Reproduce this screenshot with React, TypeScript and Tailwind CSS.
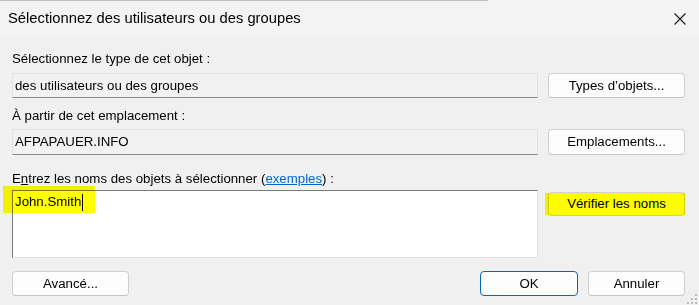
import React from "react"

const font = { fontFamily: '"Segoe UI", "Liberation Sans", Arial, sans-serif' }

function WinButton({
  children,
  className = "",
  primary = false,
}: {
  children: React.ReactNode
  className?: string
  primary?: boolean
}) {
  return (
    <button
      className={`flex items-center justify-center rounded-[4px] bg-[#fdfdfd] text-[13.25px] text-black ${
        primary ? "border border-[#0067c0]" : "border border-[#d0d0d0] border-b-[#c4c4c4]"
      } ${className}`}
    >
      {children}
    </button>
  )
}

function ReadOnlyField({ value, className = "" }: { value: string; className?: string }) {
  return (
    <div
      className={`flex items-center w-[526px] border border-[#e2e2e2] border-b-[#8a8a8a] bg-[#f2f2f2] pl-[2px] text-[13.25px] text-black ${className}`}
    >
      {value}
    </div>
  )
}

function ResizeGrip() {
  const dots = [
    [8, 0],
    [4, 4],
    [8, 4],
    [0, 8],
    [4, 8],
    [8, 8],
  ]
  return (
    <svg width="10" height="10" viewBox="0 0 10 10" className="absolute right-[2px] bottom-[1px]">
      {dots.map(([x, y], i) => (
        <rect key={i} x={x} y={y} width="2" height="2" fill="#b9b9b9" />
      ))}
    </svg>
  )
}

export default function App() {
  return (
    <div className="relative w-[699px] h-[305px] bg-[#f0f0f0] overflow-hidden" style={font}>
      {/* title bar */}
      <div className="relative flex items-center justify-between h-[36px] bg-[#f3f3f3] pl-[8px] pr-[13px]">
        <div className="absolute left-0 top-0 h-px w-[488px] bg-[#bdbdbd]" />
        <span className="text-[14.75px] text-black">Sélectionnez des utilisateurs ou des groupes</span>
        <svg width="12" height="12" viewBox="0 0 12 12" className="mt-[2px]">
          <path d="M0.5 0.5 L11.5 11.5 M11.5 0.5 L0.5 11.5" stroke="#1a1a1a" strokeWidth="1.1" />
        </svg>
      </div>

      <div className="flex flex-col pl-[12px] pr-[14px] pt-[15px]">
        <div className="h-[16px] leading-[16px] text-[13.25px] text-black">Sélectionnez le type de cet objet :</div>
        <div className="mt-[6px] flex items-start gap-[10px]">
          <ReadOnlyField value="des utilisateurs ou des groupes" className="h-[25px]" />
          <WinButton className="w-[137px] h-[25px]">Types d’objets...</WinButton>
        </div>

        <div className="mt-[10px] h-[16px] leading-[16px] text-[13.25px] text-black">À partir de cet emplacement :</div>
        <div className="mt-[5px] flex items-start gap-[10px]">
          <ReadOnlyField value="AFPAPAUER.INFO" className="h-[26px]" />
          <WinButton className="w-[137px] h-[26px]">Emplacements...</WinButton>
        </div>

        <div className="mt-[16px] h-[16px] leading-[16px] text-[13.25px] text-black">
          E<span className="underline">n</span>trez les noms des objets à sélectionner (
          <span className="text-[#0066cc] underline">exemples</span>) :
        </div>
        <div className="mt-[3px] flex items-start gap-[10px]">
          <div className="relative w-[526px] h-[68px] bg-white border-[1.5px] border-l-[#7a7a7a] border-t-[#7a7a7a] border-r-[#e3e3e3] border-b-[#e3e3e3]">
            <div className="absolute left-[2px] top-[2px] flex items-center h-[18px] text-[13.25px] text-black">
              John.Smith
              <span className="ml-[1px] inline-block w-px h-[17px] bg-black" />
            </div>
            <div className="absolute -left-[10px] -top-[5px] w-[92px] h-[27px] bg-[#ffff00] mix-blend-multiply" />
          </div>
          <div className="relative w-[137px] mt-[2px]">
            <WinButton className="w-[137px] h-[24px]">Vérifier les noms</WinButton>
            <div className="absolute -left-[3px] top-[1px] w-[140px] h-[22px] bg-[#ffff00] mix-blend-multiply" />
          </div>
        </div>

        <div className="mt-[13px] flex items-center">
          <WinButton className="w-[117px] h-[25px]">Avancé...</WinButton>
          <div className="flex-1" />
          <WinButton primary className="w-[98px] h-[25px]">OK</WinButton>
          <WinButton className="ml-[10px] w-[97px] h-[25px]">Annuler</WinButton>
        </div>
      </div>

      <ResizeGrip />
    </div>
  )
}
